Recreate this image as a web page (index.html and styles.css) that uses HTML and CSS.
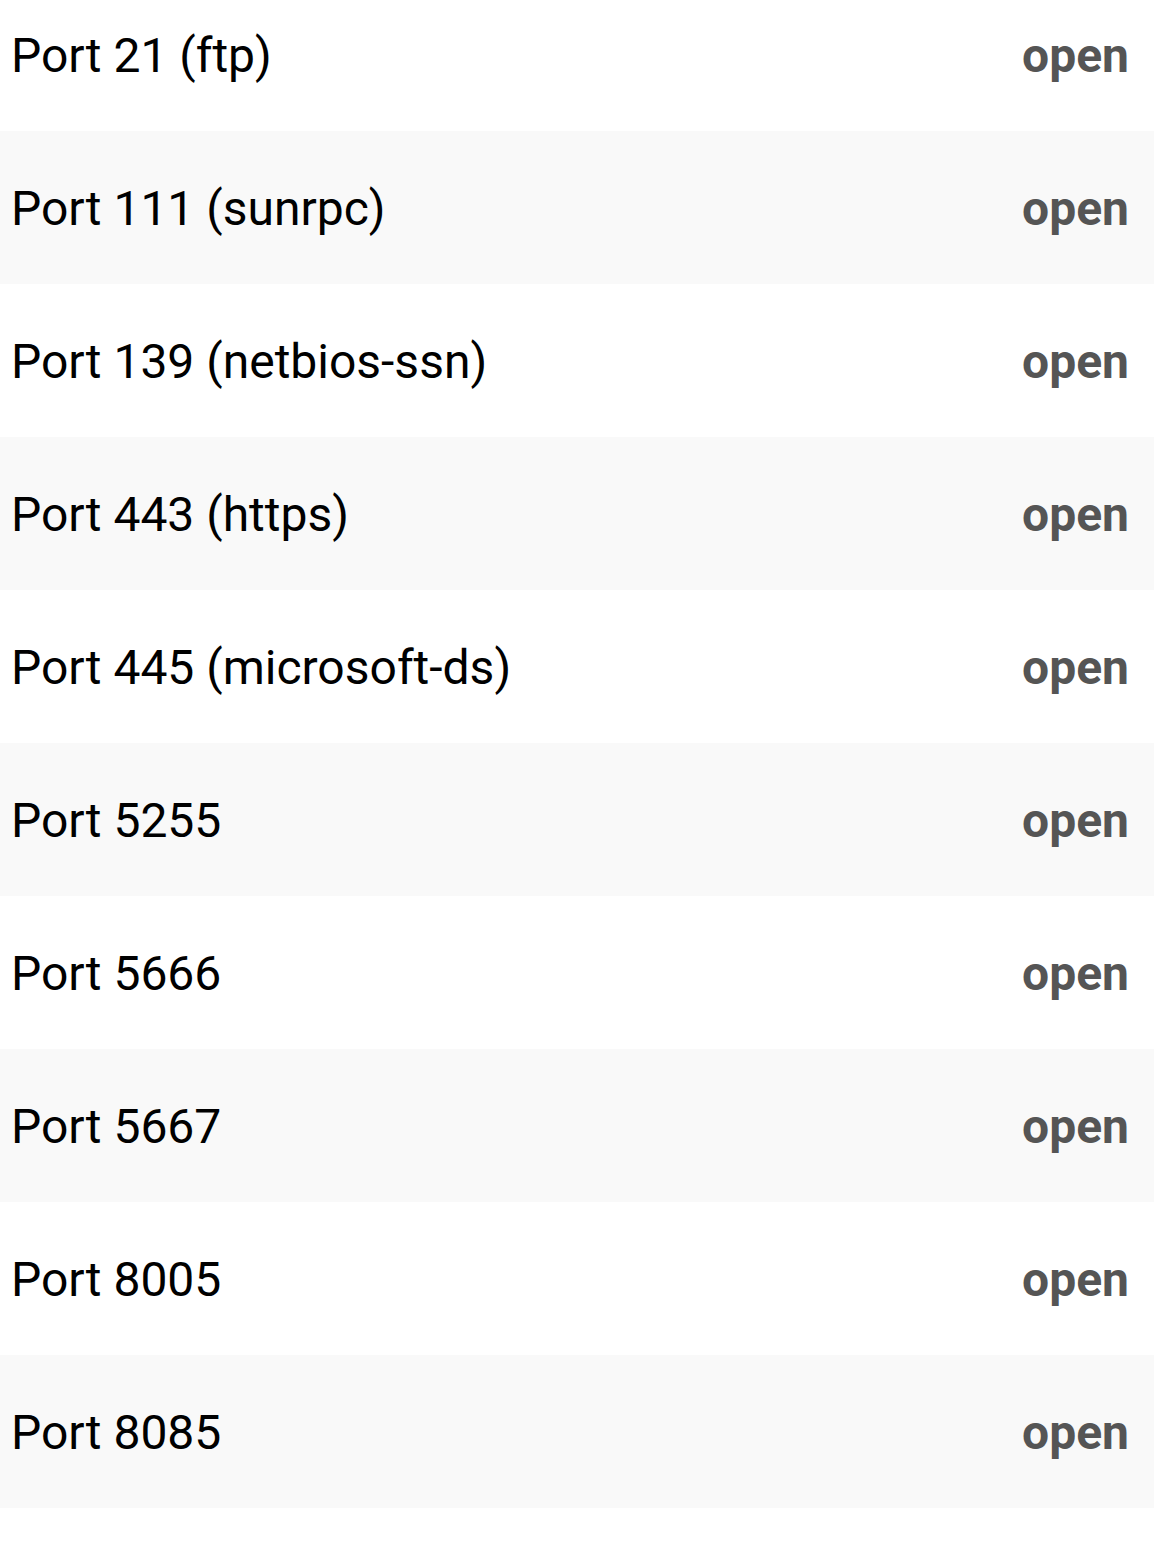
FILE: index.html
```html
<!DOCTYPE html>
<html>
<head>
<meta charset="utf-8">
<link rel="stylesheet" href="styles.css">
</head>
<body>
<ul class="ports">
  <li class="port"><span class="name">Port 21 (ftp)</span><span class="state">open</span></li>
  <li class="port"><span class="name">Port 111 (sunrpc)</span><span class="state">open</span></li>
  <li class="port"><span class="name">Port 139 (netbios-ssn)</span><span class="state">open</span></li>
  <li class="port"><span class="name">Port 443 (https)</span><span class="state">open</span></li>
  <li class="port"><span class="name">Port 445 (microsoft-ds)</span><span class="state">open</span></li>
  <li class="port"><span class="name">Port 5255</span><span class="state">open</span></li>
  <li class="port"><span class="name">Port 5666</span><span class="state">open</span></li>
  <li class="port"><span class="name">Port 5667</span><span class="state">open</span></li>
  <li class="port"><span class="name">Port 8005</span><span class="state">open</span></li>
  <li class="port"><span class="name">Port 8085</span><span class="state">open</span></li>
</ul>
</body>
</html>
```
FILE: styles.css
```css
html, body {
  margin: 0;
  padding: 0;
  background: #ffffff;
  overflow: hidden;
}
body {
  font-family: Roboto, "Noto Sans", sans-serif;
}
.ports {
  list-style: none;
  margin: -22px 0 0 0;
  padding: 0;
}
.port {
  height: 153px;
  display: flex;
  align-items: center;
  justify-content: space-between;
  padding: 2px 25px 0 11px;
  box-sizing: border-box;
}
.port:nth-child(even) {
  background: #f9f9f9;
}
.name {
  font-size: 48px;
  color: #000000;
  font-weight: 400;
}
.state {
  font-size: 48px;
  color: #555555;
  font-weight: 700;
}
```
